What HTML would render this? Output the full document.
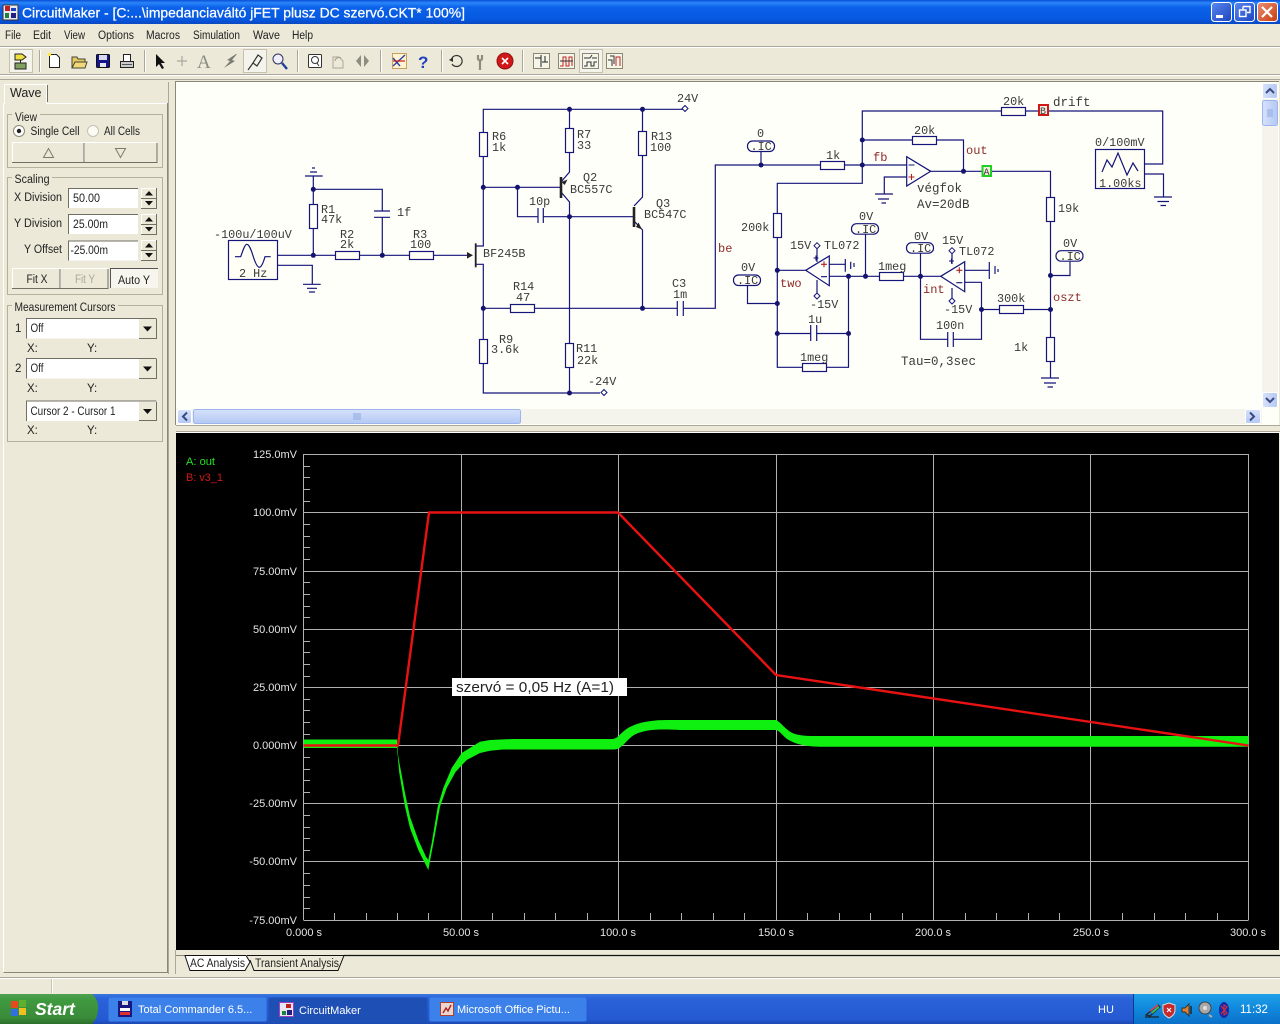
<!DOCTYPE html>
<html><head><meta charset="utf-8"><title>CircuitMaker</title>
<style>
html,body{margin:0;padding:0;background:#ece9d8;overflow:hidden}
svg{display:block}
text{font-family:"Liberation Sans",sans-serif;white-space:pre}
.m{font-family:"Liberation Mono",monospace;font-size:11.8px;fill:#3a3a3a}
.r{font-family:"Liberation Mono",monospace;font-size:12px;fill:#8c2a2a}
.w{fill:none;stroke:#14147a;stroke-width:1.2}
.b{fill:#fffff6;stroke:#14147a;stroke-width:1.2}
.d{fill:#14146e}
.ui{font-size:11.5px;fill:#222}
.pl{font-size:11px;fill:#e4e4e4}
.g{fill:none;stroke:#b0b0b0;stroke-width:1}
.t{fill:none;stroke:#b0b0b0;stroke-width:1}
.gb{fill:none;stroke:#b4b19c;stroke-width:1}
.ic{fill:#fffff6;stroke:#14147a;stroke-width:1.2}
.tb{font-size:11px;fill:#fff}
</style></head><body>
<svg width="1280" height="1024" viewBox="0 0 1280 1024" xmlns="http://www.w3.org/2000/svg">
<defs>
<linearGradient id="tt" x1="0" y1="0" x2="0" y2="1"><stop offset="0" stop-color="#0a50d8"/><stop offset=".12" stop-color="#2a86f8"/><stop offset=".3" stop-color="#0c62ea"/><stop offset=".8" stop-color="#0658e0"/><stop offset="1" stop-color="#0a48c0"/></linearGradient>
<linearGradient id="tk" x1="0" y1="0" x2="0" y2="1"><stop offset="0" stop-color="#3a78e0"/><stop offset=".15" stop-color="#2a62d8"/><stop offset=".85" stop-color="#2459d2"/><stop offset="1" stop-color="#1c48b0"/></linearGradient>
<linearGradient id="st" x1="0" y1="0" x2="0" y2="1"><stop offset="0" stop-color="#4fa04f"/><stop offset=".2" stop-color="#3f9a3f"/><stop offset=".8" stop-color="#3a8a3a"/><stop offset="1" stop-color="#2a6e2a"/></linearGradient>
<linearGradient id="try" x1="0" y1="0" x2="0" y2="1"><stop offset="0" stop-color="#1ea0e8"/><stop offset=".5" stop-color="#1088dc"/><stop offset="1" stop-color="#0c70c8"/></linearGradient>
<linearGradient id="bl" x1="0" y1="0" x2="1" y2="1"><stop offset="0" stop-color="#5a88ee"/><stop offset="1" stop-color="#1c44c0"/></linearGradient>
<linearGradient id="rd" x1="0" y1="0" x2="1" y2="1"><stop offset="0" stop-color="#ea9070"/><stop offset="1" stop-color="#c83c10"/></linearGradient>
<linearGradient id="sb" x1="0" y1="0" x2="0" y2="1"><stop offset="0" stop-color="#d6e2fb"/><stop offset="1" stop-color="#b4c8f4"/></linearGradient>
<linearGradient id="sbv" x1="0" y1="0" x2="1" y2="0"><stop offset="0" stop-color="#d6e2fb"/><stop offset="1" stop-color="#b4c8f4"/></linearGradient>
</defs>

<!-- base -->
<rect width="1280" height="1024" fill="#ece9d8"/>

<!-- title bar -->
<rect width="1280" height="24" fill="url(#tt)"/>
<rect x="3" y="5" width="15" height="15" fill="#e8e8f0" stroke="#333"/>
<rect x="5" y="6" width="5" height="5" fill="#c02020"/><rect x="11" y="8" width="5" height="3" fill="#2040c0"/><rect x="5" y="13" width="4" height="5" fill="#208040"/><rect x="11" y="13" width="5" height="5" fill="#202080"/>
<text x="22" y="17.500" font-size="14" fill="#fff" stroke="#fff" stroke-width=".25" textLength="443" lengthAdjust="spacingAndGlyphs">CircuitMaker - [C:...\impedanciaváltó jFET plusz DC szervó.CKT* 100%]</text>
<rect x="1211.500" y="2.500" width="20" height="19" rx="3" fill="url(#bl)" stroke="#fff"/>
<rect x="1216" y="15" width="7" height="3" fill="#fff"/>
<rect x="1234.500" y="2.500" width="20" height="19" rx="3" fill="url(#bl)" stroke="#fff"/>
<path d="M1243 6.500h7v6h-3M1243 6.500v3" fill="none" stroke="#fff" stroke-width="1.400"/><rect x="1239.500" y="10" width="6.500" height="6.500" fill="none" stroke="#fff" stroke-width="1.400"/>
<rect x="1257.500" y="2.500" width="20" height="19" rx="3" fill="url(#rd)" stroke="#fff"/>
<path d="M1262 7l10 10M1272 7l-10 10" stroke="#fff" stroke-width="2.200"/>

<!-- menu -->
<text x="5" y="39" class="ui" textLength="16" lengthAdjust="spacingAndGlyphs">File</text><text x="33" y="39" class="ui" textLength="18" lengthAdjust="spacingAndGlyphs">Edit</text><text x="64" y="39" class="ui" textLength="21" lengthAdjust="spacingAndGlyphs">View</text><text x="98" y="39" class="ui" textLength="36" lengthAdjust="spacingAndGlyphs">Options</text><text x="146" y="39" class="ui" textLength="34" lengthAdjust="spacingAndGlyphs">Macros</text><text x="193" y="39" class="ui" textLength="47" lengthAdjust="spacingAndGlyphs">Simulation</text><text x="253" y="39" class="ui" textLength="27" lengthAdjust="spacingAndGlyphs">Wave</text><text x="292" y="39" class="ui" textLength="21" lengthAdjust="spacingAndGlyphs">Help</text>
<path d="M0 46.500H1280" stroke="#aca899"/><path d="M0 47.500H1280" stroke="#fff"/>
<path d="M0 74.500H1280" stroke="#aca899"/><path d="M0 75.500H1280" stroke="#fff"/>
<path d="M0 79.500H1280" stroke="#aca899"/>

<!-- toolbar separators -->
<g stroke="#aca899"><path d="M39.500 50V72M144.500 50V72M297.500 50V72M380.500 50V72M441.500 50V72M522.500 50V72"/></g>
<g stroke="#fff"><path d="M40.500 50V72M145.500 50V72M298.500 50V72M381.500 50V72M442.500 50V72M523.500 50V72"/></g>
<!-- toolbar pressed -->
<rect x="9.500" y="49.500" width="23" height="23" fill="#f5f4ec" stroke="#c4c1b0"/>
<rect x="243.500" y="49.500" width="23" height="23" fill="#f5f4ec" stroke="#c4c1b0"/>
<rect x="579.500" y="49.500" width="23" height="23" fill="#f5f4ec" stroke="#c4c1b0"/>
<!-- icons -->
<path d="M15 54h7l4 3-4 3h-7z" fill="#f0e040" stroke="#222"/><path d="M15 63h11v6H15z" fill="#80a060" stroke="#222"/><path d="M20.500 60v3" stroke="#222"/>
<path d="M49.500 54.500h7l3 3v10h-10z" fill="#fff" stroke="#222"/><rect x="48" y="53" width="3" height="3" fill="#ffe840"/>
<path d="M72 57h5l1 2h7v9H72z" fill="#e8c860" stroke="#443"/><path d="M72 68l3-6h12l-2 6z" fill="#f2d878" stroke="#443"/>
<rect x="96.500" y="54.500" width="13" height="13" rx="1" fill="#14148c" stroke="#111"/><rect x="99" y="55" width="8" height="5" fill="#d8d8f0"/><rect x="100" y="63" width="6" height="4" fill="#e8e8e8"/>
<rect x="123.500" y="54.500" width="7" height="7" fill="#fff" stroke="#222"/><rect x="120.500" y="61.500" width="13" height="6" fill="#ccc" stroke="#222"/><path d="M122 64.500h10" stroke="#555"/>
<path d="M156 54l0 13 3-3 3 5 2-1-3-5h4z" fill="#111"/>
<path d="M182 56v10M177 61h10" stroke="#a8a8a0" stroke-width="1.200"/>
<text x="197" y="68" font-size="19" fill="#8a8a82" style="font-family:'Liberation Serif',serif">A</text>
<path d="M236 54l-9 6 3 1-6 7 11-7-3-1 5-6z" fill="#7c7c74"/>
<path d="M248 70l5-7M253 63l5-8 4 3-5 8z" fill="none" stroke="#333" stroke-width="1.200"/>
<circle cx="278" cy="59" r="5" fill="#eef" stroke="#335"/><path d="M282 63l5 6" stroke="#2040a0" stroke-width="2.400"/>
<rect x="308.500" y="54.500" width="13" height="13" rx="1" fill="#fff" stroke="#333"/><circle cx="315" cy="60" r="3.500" fill="none" stroke="#333"/><path d="M317 63l2 3" stroke="#333"/>
<path d="M333 57h6l4 4v7h-10z" fill="none" stroke="#aaa69a"/><path d="M335 61a4 4 0 0 1 6-3" fill="none" stroke="#a09c90"/>
<path d="M361 55l-5 6 5 6zM364 55l5 6-5 6z" fill="#8f8c80"/>
<rect x="392.500" y="53.500" width="14" height="15" fill="#fff3d0" stroke="#c8a060"/><path d="M393 66l12-11M393 58l7 8" stroke="#3040a0" stroke-width="1.400"/><path d="M393 61h12" stroke="#c02020" stroke-width="1.200"/>
<text x="418" y="68" font-size="17" font-weight="bold" fill="#2040c0">?</text>
<path d="M452 58a5.500 5.500 0 1 1 0 6" fill="none" stroke="#333" stroke-width="1.200"/><path d="M449 60l4-3v5z" fill="#333"/>
<path d="M478 55v4l2 2 2-2v-4M480 61v9" fill="none" stroke="#8f8c80" stroke-width="2.200"/>
<circle cx="505" cy="61" r="8" fill="#d01818" stroke="#901010"/><path d="M502 58l6 6M508 58l-6 6" stroke="#fff" stroke-width="1.600"/>
<g fill="none"><rect x="533.500" y="53.500" width="16" height="15" fill="#f6f6e8" stroke="#8a8776"/><path d="M535 58h6v9M541 58v-3M545 56v6M542 62h6" stroke="#222"/></g>
<g fill="none"><rect x="558.500" y="53.500" width="16" height="15" fill="#f6f6e8" stroke="#8a8776"/><path d="M560 66h3v-9h3v9h3v-9h3v9" stroke="#c02020"/><path d="M560 61h13" stroke="#333"/></g>
<g fill="none"><rect x="582.500" y="53.500" width="16" height="15" fill="#f6f6e8" stroke="#8a8776"/><path d="M584 58h6l2-3M592 58h5" stroke="#333"/><path d="M584 66h3v-4h4v4h3v-4h3" stroke="#333"/></g>
<g fill="none"><rect x="606.500" y="53.500" width="16" height="15" fill="#f6f6e8" stroke="#8a8776"/><path d="M608 60h4v6M610 56h4v8" stroke="#333"/><path d="M616 66v-9h4v9" stroke="#c02020"/></g>

<!-- left panel -->
<path d="M167.500 103V972.500H3.500" fill="none" stroke="#8a8776"/>
<path d="M168.500 82V974" stroke="#aca899"/>
<path d="M3.500 972V103.500H4M47 103.500H167" fill="none" stroke="#fff"/>
<path d="M4.500 104V84.500H46.500V104" fill="#ece9d8" stroke="#fff"/>
<path d="M47.500 85V102" stroke="#716f64"/>
<text x="10" y="97" font-size="12.500" fill="#222">Wave</text>

<!-- View -->
<rect x="7.500" y="114.500" width="155" height="53" class="gb"/><rect x="12" y="110" width="28" height="10" fill="#ece9d8"/>
<text x="15" y="121" class="ui" textLength="22" lengthAdjust="spacingAndGlyphs">View</text>
<circle cx="19" cy="131" r="5.500" fill="#fff" stroke="#8a8776"/><circle cx="19" cy="131" r="2.200" fill="#222"/>
<text x="30.500" y="135" class="ui" textLength="49" lengthAdjust="spacingAndGlyphs">Single Cell</text>
<circle cx="93" cy="131" r="5.500" fill="#fbfaf4" stroke="#c4c1b0"/>
<text x="104" y="135" class="ui" textLength="36" lengthAdjust="spacingAndGlyphs">All Cells</text>
<path d="M12.500 162V142.500H84M84.500 162V142.500H157" fill="none" stroke="#fff"/>
<path d="M12 162.500H84V143M84.500 162.500H157V143" fill="none" stroke="#716f64"/>
<path d="M43.500 157.500l5-9 5 9z" fill="none" stroke="#7c7a6c"/><path d="M115.500 148.500l5 9 5-9z" fill="none" stroke="#7c7a6c"/>

<!-- Scaling -->
<rect x="7.500" y="177.500" width="155" height="117" class="gb"/><rect x="12" y="172" width="40" height="10" fill="#ece9d8"/>
<text x="14.500" y="183" class="ui" textLength="35" lengthAdjust="spacingAndGlyphs">Scaling</text>
<text x="14" y="201" class="ui" textLength="48" lengthAdjust="spacingAndGlyphs">X Division</text><text x="14" y="227" class="ui" textLength="48" lengthAdjust="spacingAndGlyphs">Y Division</text><text x="24" y="253" class="ui" textLength="38" lengthAdjust="spacingAndGlyphs">Y Offset</text>
<g fill="#fff"><rect x="68" y="188" width="70" height="20"/><rect x="68" y="214" width="70" height="20"/><rect x="68" y="240.500" width="70" height="20"/></g>
<g stroke="#716f64" fill="none"><path d="M68.500 208V188.500H138M68.500 234V214.500H138M68.500 260.500V241H138"/></g>
<text x="73" y="202" class="ui" textLength="27" lengthAdjust="spacingAndGlyphs">50.00</text><text x="73" y="228" class="ui" textLength="35" lengthAdjust="spacingAndGlyphs">25.00m</text><text x="70.500" y="254" class="ui" textLength="37.500" lengthAdjust="spacingAndGlyphs">-25.00m</text>
<g fill="none" stroke="#fff"><path d="M141.500 208V188.500H156M141.500 234V214.500H156M141.500 260V240.500H156"/></g>
<g fill="none" stroke="#716f64"><path d="M141 208.500H156.500V188M141 234.500H156.500V214M141 260.500H156.500V240"/><path d="M141 198.500H156M141 224.500H156M141 250.500H156"/></g>
<path d="M149 191l-4 4.500h8zM149 205.500l-4-4.500h8zM149 217l-4 4.500h8zM149 231.500l-4-4.500h8zM149 243l-4 4.500h8zM149 257.500l-4-4.500h8z" fill="#111"/>
<path d="M12.500 288V268.500H60M60.500 288V268.500H108" fill="none" stroke="#fff"/>
<path d="M12 288.500H60V269M60.500 288.500H108V269" fill="none" stroke="#716f64"/>
<rect x="110" y="268" width="48" height="20" fill="#f6f5ee"/>
<path d="M110.500 288V268.500H158" fill="none" stroke="#555"/>
<text x="26.500" y="283" class="ui" textLength="21" lengthAdjust="spacingAndGlyphs">Fit X</text><text x="75" y="283" class="ui" style="fill:#aca899" textLength="20" lengthAdjust="spacingAndGlyphs">Fit Y</text><text x="118" y="284" class="ui" textLength="32" lengthAdjust="spacingAndGlyphs">Auto Y</text>

<!-- Measurement -->
<rect x="7.500" y="305.500" width="155" height="136" class="gb"/><rect x="12" y="301" width="106" height="10" fill="#ece9d8"/>
<text x="14.500" y="311" class="ui" textLength="101" lengthAdjust="spacingAndGlyphs">Measurement Cursors</text>
<text x="15" y="332" class="ui">1</text><text x="15" y="372" class="ui">2</text>
<g fill="#fff"><rect x="26.500" y="318.500" width="130" height="20"/><rect x="26.500" y="358.500" width="130" height="20"/><rect x="26.500" y="401" width="130" height="20"/></g>
<g fill="none" stroke="#716f64"><path d="M26.500 338.500V318.500H156.500M26.500 378.500V358.500H156.500M26.500 421V401H156.500"/></g>
<g fill="#ece9d8"><rect x="139" y="319" width="17.500" height="19"/><rect x="139" y="359" width="17.500" height="19"/><rect x="139" y="402" width="17.500" height="18"/></g>
<g fill="none" stroke="#716f64"><path d="M139 338.500H156.500V319M139 378.500H156.500V359M139 420.500H156.500V402"/></g>
<path d="M143 326.500h9l-4.500 5zM143 366.500h9l-4.500 5zM143 409h9l-4.500 5z" fill="#111"/>
<text x="30.500" y="332" class="ui" textLength="13" lengthAdjust="spacingAndGlyphs">Off</text><text x="30.500" y="372" class="ui" textLength="13" lengthAdjust="spacingAndGlyphs">Off</text><text x="30.500" y="415" class="ui" textLength="85" lengthAdjust="spacingAndGlyphs">Cursor 2 - Cursor 1</text>
<text x="27" y="352" class="ui">X:</text><text x="87" y="352" class="ui">Y:</text>
<text x="27" y="392" class="ui">X:</text><text x="87" y="392" class="ui">Y:</text>
<text x="27" y="434" class="ui">X:</text><text x="87" y="434" class="ui">Y:</text>

<!-- schematic area -->
<rect x="176" y="82" width="1103" height="343" fill="#fffffa"/>
<path d="M175.500 425V81.500H1279" fill="none" stroke="#8a8776"/>

<!-- v scrollbar -->
<rect x="1262" y="83" width="16" height="325" fill="#f4f3ec"/>
<rect x="1262.500" y="83.500" width="15" height="15" rx="2" fill="url(#sbv)" stroke="#fff"/>
<path d="M1266 93l4-4 4 4" fill="none" stroke="#3a4a80" stroke-width="2"/>
<rect x="1262.500" y="100.500" width="15" height="25" rx="2" fill="url(#sbv)" stroke="#9db5ee"/>
<path d="M1267 110h6M1267 112h6M1267 114h6M1267 116h6" stroke="#8fa8e0"/>
<rect x="1262.500" y="392.500" width="15" height="15" rx="2" fill="url(#sbv)" stroke="#fff"/>
<path d="M1266 398l4 4 4-4" fill="none" stroke="#3a4a80" stroke-width="2"/>
<!-- h scrollbar -->
<rect x="177" y="409" width="1085" height="15" fill="#f4f3ec"/>
<rect x="177.500" y="409.500" width="14" height="14" rx="2" fill="url(#sb)" stroke="#fff"/>
<path d="M187 412.500l-4 4 4 4" fill="none" stroke="#3a4a80" stroke-width="2"/>
<rect x="193.500" y="409.500" width="327" height="14" rx="2" fill="url(#sb)" stroke="#9db5ee"/>
<path d="M354 413v7M356 413v7M358 413v7M360 413v7" stroke="#8fa8e0"/>
<rect x="1245.500" y="409.500" width="15" height="14" rx="2" fill="url(#sb)" stroke="#fff"/>
<path d="M1250 412.500l4 4-4 4" fill="none" stroke="#3a4a80" stroke-width="2"/>
<path d="M176 425.500H1280" stroke="#aca899"/>
<path d="M176 431.500H1280" stroke="#aca899"/>
<path d="M176 432.500H1280" stroke="#fff"/>

<!-- wires -->
<g class="w">
<path d="M483.300 132V109.300H685"/>
<path d="M483.300 157V246H476M476 264.300H483.300V339M483.300 364V393H600"/>
<path d="M483.300 187.300H561M517.500 187.300V216.700H538M543.300 216.700H634"/>
<path d="M569.500 109.300V128M569.500 152V172L561 182M561 192L569.500 202V393"/>
<path d="M642.500 109.300V132M642.500 156V197L634 206M634 221L642.500 230V308.300"/>
<path d="M483.300 308.300H510M534.300 308.300H677.300M683.300 308.300H715.300V165H820M844 165H906.700"/>
<path d="M278 255.300H335.300M359.700 255.300H409.300M433.700 255.300H470"/>
<path d="M278 265.300H312.300V284M313.300 255.300V228.700M313.300 204.300V176M313.300 189.300H382.300V211M382.300 217.300V255.300"/>
<path d="M862.300 165V111H1001M1026 111H1162.700V164H1145M1145 174H1163.500V197"/>
<path d="M862.300 140H912M937 140H963.500V171M930.700 171.300H1050.500V197M1050.500 221V337M1050.500 362V378"/>
<path d="M906.700 177H884.300V194"/>
<path d="M862.300 165V183.300H777.300V213M777.300 238V367.300H802M827 367.300H848.500V276.300"/>
<path d="M777.300 270.300H805.700M777.300 303.500H747.500V285.700M777.300 333.500H810.700M816.700 333.500H848.500"/>
<path d="M829.300 276.300H879M903.700 276.300H940.700M829.300 264.300H845.300"/>
<path d="M865.500 234.300V276.300M761 151V165"/>
<path d="M817 248V262M817 280V293"/>
<path d="M920.500 253.300V339.300H947.700M953.300 339.300H981.500V282.300H964.700M964.700 270.300H989.300"/>
<path d="M981.500 309.500H999M1024 309.500H1050.500"/>
<path d="M952 253V264M952 288V298"/>
<path d="M1070 261.700V275.500H1050.500"/>
</g>
<!-- transistors, plates, grounds -->
<g fill="none" stroke="#14147a" stroke-width="1.200">
<path d="M374 211H390M374 217.300H390"/>
<path d="M538 208V223M543.300 208V223"/>
<path d="M677.300 301V316M683.300 301V316"/>
<path d="M810.700 325V341M816.700 325V341"/>
<path d="M947.700 332V347M953.300 332V347"/>
<path d="M845.300 259V271.700M850.700 261.700V269M854 263V267"/>
<path d="M989.300 262V279M995 266V274M998 269V272"/>
<path d="M305 176H322.700M310 172H317M312 168H315"/>
<path d="M303 284.300H320.700M307 288.300H317M309 292H315"/>
<path d="M875 194H893M878 199H889M881.500 203H886"/>
<path d="M1154 197H1172M1157.500 201.500H1169M1160.500 205.500H1166"/>
<path d="M1041 378H1059M1044 383H1056M1047.500 387H1053"/>
</g>
<path d="M561 177V198M634 207V227" stroke="#222" stroke-width="2.600" fill="none"/>
<path d="M475.700 243.300V267.300" stroke="#222" stroke-width="1.800" fill="none"/>
<path d="M467 252l6 3.300-6 3.300z" fill="#222"/>
<path d="M561.500 182l6-2.500-2.800 5.500z" fill="#222"/>
<path d="M642 229.500l-6-2.500 2.500-4.500z" fill="#222"/>
<!-- resistors -->
<g class="b">
<rect x="479.500" y="132.500" width="8" height="24"/><rect x="565.500" y="128.500" width="8" height="24"/><rect x="638.500" y="131.500" width="8" height="24"/>
<rect x="309.500" y="204.500" width="8" height="24"/><rect x="335.500" y="251.500" width="24" height="8"/><rect x="409.500" y="251.500" width="24" height="8"/>
<rect x="510.500" y="304.500" width="24" height="8"/><rect x="479.500" y="339.500" width="8" height="24"/><rect x="565.500" y="343.500" width="8" height="24"/>
<rect x="820.500" y="161.500" width="24" height="8"/><rect x="912.500" y="136.500" width="24" height="8"/><rect x="1001.500" y="107.500" width="24" height="8"/>
<rect x="773.500" y="213.500" width="8" height="24"/><rect x="802.500" y="363.500" width="24" height="8"/><rect x="879.500" y="272.500" width="24" height="8"/>
<rect x="999.500" y="305.500" width="24" height="8"/><rect x="1046.500" y="197.500" width="8" height="24"/><rect x="1046.500" y="337.500" width="8" height="24"/>
</g>
<!-- opamps -->
<g fill="#fffffa" stroke="#14147a" stroke-width="1.200">
<path d="M906.700 156.700V186L930.700 171.300z"/>
<path d="M805.700 270.300L829.300 256V285.700z"/>
<path d="M940.700 276.300L964.700 261.700V291.700z"/>
</g>
<g stroke="#b02020" stroke-width="1.100"><path d="M908.500 177h6M911.500 174v6M821 264.300h6M824 261.300v6M956.300 270.300h6M959.300 267.300v6"/></g>
<g stroke="#14147a" stroke-width="1.100"><path d="M908.500 165h6M821 276.700h6M956.300 282.700h6M813.500 258h5M816 255.500v5M949 261h5M951.500 258.500v5"/></g>
<!-- diamonds -->
<g fill="#fffffa" stroke="#14147a" stroke-width="1"><path d="M685 105.500l3 3-3 3-3-3zM604 389.500l3 3-3 3-3-3zM817 242.700l3 3-3 3-3-3zM817 293l3 3-3 3-3-3zM952 247.700l3 3-3 3-3-3zM952 298l3 3-3 3-3-3z"/></g>
<!-- dots -->
<g class="d">
<circle cx="569.500" cy="109.300" r="2.500"/><circle cx="642.500" cy="109.300" r="2.500"/><circle cx="483.300" cy="187.300" r="2.500"/><circle cx="517.500" cy="187.300" r="2.500"/><circle cx="569.500" cy="216.700" r="2.500"/><circle cx="313.300" cy="189.300" r="2.500"/><circle cx="313.300" cy="255.300" r="2.500"/><circle cx="382.300" cy="255.300" r="2.500"/><circle cx="483.300" cy="308.300" r="2.500"/><circle cx="642.500" cy="308.300" r="2.500"/><circle cx="569.500" cy="393" r="2.500"/>
<circle cx="761" cy="165" r="2.500"/><circle cx="862.300" cy="165" r="2.500"/><circle cx="862.300" cy="140" r="2.500"/><circle cx="963.500" cy="171.300" r="2.500"/>
<circle cx="777.300" cy="270.300" r="2.500"/><circle cx="777.300" cy="303.500" r="2.500"/><circle cx="777.300" cy="333.500" r="2.500"/><circle cx="848.500" cy="333.500" r="2.500"/><circle cx="848.500" cy="276.300" r="2.500"/><circle cx="865.500" cy="276.300" r="2.500"/><circle cx="920.500" cy="276.300" r="2.500"/><circle cx="981.500" cy="309.500" r="2.500"/><circle cx="1050.500" cy="275.500" r="2.500"/><circle cx="1050.500" cy="309.500" r="2.500"/>
</g>
<!-- sources -->
<rect x="228.500" y="240.500" width="49" height="39" class="b"/>
<path d="M235 256.700H240.700C243 250 245 244.300 246.700 244.300C249.500 244.300 251.500 251 253.300 256.700C255 262 257 267.300 259.300 267.300C261.500 267.300 263.500 262 265 256.700H270.700" class="w"/>
<rect x="1095.500" y="149.500" width="49" height="39" class="b"/>
<path d="M1102 172L1107 160L1112 167L1118 153L1127 175L1133 163L1138 171" class="w"/>
<!-- IC boxes -->
<g class="ic">
<rect x="747.500" y="141" width="27" height="10.500" rx="5"/><rect x="851.500" y="223.700" width="27" height="10.500" rx="5"/><rect x="733.500" y="275" width="27" height="10.500" rx="5"/><rect x="906.500" y="242.700" width="27" height="10.500" rx="5"/><rect x="1056" y="250.700" width="27" height="10.500" rx="5"/>
</g>
<!-- probes -->
<rect x="1039" y="105" width="9" height="10" fill="#f4f0e0" stroke="#d01818" stroke-width="2"/>
<rect x="982.500" y="166" width="8.500" height="10" fill="#f4f0e0" stroke="#20d020" stroke-width="2"/>
<!-- schematic text -->
<g>
<text class="m" x="1040" y="114" style="font-size:10px">B</text><text class="m" x="983.500" y="175" style="font-size:10px">A</text>
<text class="m" x="214" y="238">-100u/100uV</text><text class="m" x="239" y="277">2 Hz</text>
<text class="m" x="321" y="213">R1</text><text class="m" x="321" y="223">47k</text>
<text class="m" x="340" y="238">R2</text><text class="m" x="340" y="248">2k</text>
<text class="m" x="413" y="238">R3</text><text class="m" x="410" y="248">100</text>
<text class="m" x="397" y="216">1f</text>
<text class="m" x="492" y="140">R6</text><text class="m" x="492" y="151">1k</text>
<text class="m" x="577" y="138">R7</text><text class="m" x="577" y="149">33</text>
<text class="m" x="651" y="140">R13</text><text class="m" x="650" y="151">100</text>
<text class="m" x="583" y="181">Q2</text><text class="m" x="570" y="193">BC557C</text>
<text class="m" x="656" y="207">Q3</text><text class="m" x="644" y="218">BC547C</text>
<text class="m" x="529" y="205">10p</text>
<text class="m" x="483" y="257">BF245B</text>
<text class="m" x="513" y="290">R14</text><text class="m" x="516" y="301">47</text>
<text class="m" x="499" y="343">R9</text><text class="m" x="491" y="353">3.6k</text>
<text class="m" x="576" y="352">R11</text><text class="m" x="577" y="364">22k</text>
<text class="m" x="588" y="385">-24V</text><text class="m" x="677" y="102">24V</text>
<text class="m" x="672" y="287">C3</text><text class="m" x="673" y="298">1m</text>
<text class="m" x="757" y="137">0</text><text class="m" x="750.500" y="150">.IC</text>
<text class="m" x="826" y="159">1k</text>
<text class="m" x="914" y="134">20k</text><text class="m" x="1003" y="105">20k</text>
<text class="m" x="1053" y="106" style="font-size:12.500px">drift</text>
<text class="m" x="1095" y="146">0/100mV</text><text class="m" x="1099" y="187">1.00ks</text>
<text class="m" x="917" y="192" style="font-size:12.500px">végfok</text><text class="m" x="917" y="208" style="font-size:12.500px">Av=20dB</text>
<text class="m" x="1058" y="212">19k</text>
<text class="m" x="741" y="231">200k</text>
<text class="m" x="741" y="271">0V</text><text class="m" x="737" y="284">.IC</text>
<text class="m" x="859" y="220">0V</text><text class="m" x="855" y="233">.IC</text>
<text class="m" x="914" y="240">0V</text><text class="m" x="910" y="252">.IC</text>
<text class="m" x="1063" y="247">0V</text><text class="m" x="1059.500" y="260">.IC</text>
<text class="m" x="790" y="249">15V</text><text class="m" x="824" y="249">TL072</text>
<text class="m" x="810" y="308">-15V</text>
<text class="m" x="942" y="244">15V</text><text class="m" x="959" y="255">TL072</text>
<text class="m" x="944" y="313">-15V</text>
<text class="m" x="878" y="270">1meg</text><text class="m" x="808" y="323">1u</text><text class="m" x="800" y="361">1meg</text>
<text class="m" x="936" y="329">100n</text><text class="m" x="901" y="365" style="font-size:12.500px">Tau=0,3sec</text>
<text class="m" x="997" y="302">300k</text><text class="m" x="1014" y="351">1k</text>
<text class="r" x="718" y="252">be</text><text class="r" x="780" y="287">two</text><text class="r" x="873" y="161">fb</text><text class="r" x="966" y="154">out</text><text class="r" x="923" y="293">int</text><text class="r" x="1053" y="301">oszt</text>
</g>

<!-- plot -->
<rect x="176" y="433" width="1103" height="517" fill="#000"/>
<g class="g">
<path d="M303.500 454.500H1248.500M303.500 512.500H1248.500M303.500 571.500H1248.500M303.500 629.500H1248.500M303.500 687.500H1248.500M303.500 745.500H1248.500M303.500 803.500H1248.500M303.500 861.500H1248.500M303.500 920.500H1248.500"/>
<path d="M303.500 454V920M461.500 454V920M618.500 454V920M776.500 454V920M933.500 454V920M1090.500 454V920M1248.500 454V920"/>
</g>
<path class="t" d="M303 466.500h7M303 477.500h7M303 489.500h7M303 501.500h7M303 524.500h7M303 536.500h7M303 547.500h7M303 559.500h7M303 582.500h7M303 594.500h7M303 606.500h7M303 617.500h7M303 641.500h7M303 652.500h7M303 664.500h7M303 676.500h7M303 699.500h7M303 710.500h7M303 722.500h7M303 734.500h7M303 757.500h7M303 769.500h7M303 780.500h7M303 792.500h7M303 815.500h7M303 827.500h7M303 838.500h7M303 850.500h7M303 873.500h7M303 885.500h7M303 897.500h7M303 908.500h7"/>
<path class="t" d="M334.500 920v-7M366.500 920v-7M397.500 920v-7M428.500 920v-7M492.500 920v-7M524.500 920v-7M555.500 920v-7M587.500 920v-7M650.500 920v-7M681.500 920v-7M713.500 920v-7M744.500 920v-7M807.500 920v-7M839.500 920v-7M870.500 920v-7M902.500 920v-7M965.500 920v-7M996.500 920v-7M1028.500 920v-7M1059.500 920v-7M1122.500 920v-7M1154.500 920v-7M1185.500 920v-7M1217.500 920v-7"/>
<text x="297" y="458" class="pl" text-anchor="end">125.0mV</text><text x="297" y="516" class="pl" text-anchor="end">100.0mV</text><text x="297" y="575" class="pl" text-anchor="end">75.00mV</text><text x="297" y="633" class="pl" text-anchor="end">50.00mV</text><text x="297" y="691" class="pl" text-anchor="end">25.00mV</text><text x="297" y="749" class="pl" text-anchor="end">0.000mV</text><text x="297" y="807" class="pl" text-anchor="end">-25.00mV</text><text x="297" y="865" class="pl" text-anchor="end">-50.00mV</text><text x="297" y="924" class="pl" text-anchor="end">-75.00mV</text>
<text x="304" y="936" class="pl" text-anchor="middle">0.000 s</text><text x="461" y="936" class="pl" text-anchor="middle">50.00 s</text><text x="618" y="936" class="pl" text-anchor="middle">100.0 s</text><text x="776" y="936" class="pl" text-anchor="middle">150.0 s</text><text x="933" y="936" class="pl" text-anchor="middle">200.0 s</text><text x="1091" y="936" class="pl" text-anchor="middle">250.0 s</text><text x="1248" y="936" class="pl" text-anchor="middle">300.0 s</text>
<text x="186" y="465" font-size="11" fill="#20e020" textLength="29" lengthAdjust="spacingAndGlyphs">A: out</text>
<text x="186" y="481" font-size="11" fill="#d01818" textLength="37" lengthAdjust="spacingAndGlyphs">B: v3_1</text>
<!-- green trace -->
<path fill="#10f010" d="M303.500 739.500H397L398.300 756.700L405 793L410 816.700L418.300 840L426 856.700L428.300 860L431.700 843L437.700 806.700L443.300 788L451.700 768L461.700 753L480 741.700L490 740L513 739H612C618 739 620 733 628 728C636 723 650 720 667 720H776C782 723 786 731 795 734C802 736 808 736 820 736H1248.500V746.700H820C805 746.500 795 744 787 739C782 735 780 731 776 730H680C660 729 645 729 634 735C626 740 622 749.500 614 749.500H503L490 750.700L480 753L466.700 760L455.700 771.700L446.700 788L440 806.700L434 840L428.300 870L418.300 850L410 828L405 806.700L399.300 773L397 748H303.500Z"/>
<!-- red trace -->
<path d="M303.500 745.500H398L429 512.500H618L776 675L1248.500 745.500" fill="none" stroke="#e81212" stroke-width="2.400"/>
<!-- annotation -->
<rect x="452" y="678" width="175" height="18" fill="#fff"/>
<text x="456" y="692" font-size="15" fill="#222" textLength="158" lengthAdjust="spacingAndGlyphs">szervó = 0,05 Hz (A=1)</text>

<!-- bottom tabs -->
<path d="M175.500 950V974" stroke="#aca899"/>
<path d="M176 955.500H186" stroke="#8a8776"/>
<path d="M344 955.500H1280" stroke="#111" stroke-width="1.200"/>
<path d="M185 955.500L190 970.500H245L250 962L246 955.500Z" fill="#fff" stroke="#111"/>
<path d="M250 960L254 970.500H338L344 955.500H247" fill="#ece9d8" stroke="#111"/>
<text x="190" y="967" font-size="11.500" fill="#222" textLength="55" lengthAdjust="spacingAndGlyphs">AC Analysis</text>
<text x="255" y="967" font-size="11.500" fill="#222" textLength="84" lengthAdjust="spacingAndGlyphs">Transient Analysis</text>

<!-- status -->
<path d="M0 977.500H1280" stroke="#aca899"/><path d="M0 978.500H1280" stroke="#fff"/>
<path d="M51.500 979V993" stroke="#c8c5b2"/><path d="M52.500 979V993" stroke="#fff"/>

<!-- taskbar -->
<rect y="994" width="1280" height="30" fill="url(#tk)"/>
<path d="M0 994H92Q99 1000 98 1009Q98 1018 92 1024H0Z" fill="url(#st)"/>
<g><rect x="11" y="1001" width="7" height="7" fill="#e84820"/><rect x="19" y="1000" width="7" height="7" fill="#60b030"/><rect x="11" y="1009" width="7" height="7" fill="#3070e0"/><rect x="19" y="1008" width="7" height="7" fill="#f0c020"/></g>
<text x="35" y="1015" font-size="17.500" font-weight="bold" font-style="italic" fill="#fff">Start</text>
<rect x="108.500" y="997.500" width="158" height="24" rx="2" fill="#3c80ea"/>
<rect x="268.500" y="997.500" width="159" height="25" rx="2" fill="#1e4fb4"/>
<rect x="429.500" y="997.500" width="157" height="24" rx="2" fill="#3c80ea"/>
<rect x="118" y="1001" width="14" height="16" fill="#181880"/><rect x="120" y="1008" width="10" height="3" fill="#fff"/><rect x="120" y="1012" width="10" height="3" fill="#e03030"/><rect x="122" y="1001" width="6" height="4" fill="#ddd"/>
<rect x="279.500" y="1002.500" width="14" height="14" fill="#e8e8f0" stroke="#a040c0"/><rect x="286" y="1004" width="5" height="4" fill="#c02020"/><rect x="282" y="1011" width="4" height="4" fill="#208040"/><rect x="287" y="1010" width="5" height="5" fill="#202080"/>
<rect x="440.500" y="1002.500" width="13" height="13" fill="#e8d8d0" stroke="#b04030"/><path d="M443 1013l3-5 2 3 3-6" fill="none" stroke="#b02020" stroke-width="1.400"/>
<text x="138" y="1013" class="tb">Total Commander 6.5...</text>
<text x="299" y="1014" class="tb">CircuitMaker</text>
<text x="457" y="1013" class="tb">Microsoft Office Pictu...</text>
<text x="1098" y="1013" class="tb">HU</text>
<rect x="1133" y="994" width="147" height="30" fill="url(#try)"/>
<path d="M1133.500 994V1024" stroke="#0a3a90"/>
<path d="M1146 1015l12-10 2 2-10 9zM1145 1017h14" fill="none" stroke="#222" stroke-width="1.200"/><path d="M1150 1011l8-6" stroke="#e04040" stroke-width="1.500"/><path d="M1152 1013l7-6" stroke="#40c040" stroke-width="1.500"/>
<path d="M1169 1003l6 2v5q0 5-6 8q-6-3-6-8v-5z" fill="#c82828" stroke="#ddd"/><path d="M1167 1008l4 4M1171 1008l-4 4" stroke="#fff" stroke-width="1.200"/>
<path d="M1182 1008h3l4-4v12l-4-4h-3z" fill="#e08030" stroke="#333"/><path d="M1191 1006v8" stroke="#222" stroke-width="1.400"/>
<circle cx="1205" cy="1008" r="6" fill="#a8a8a8" stroke="#444"/><circle cx="1205" cy="1008" r="2" fill="#e0e0e0"/><path d="M1209 1015l3 2" stroke="#aaa" stroke-width="2"/>
<ellipse cx="1224" cy="1010" rx="5" ry="8" fill="#1828a8"/><path d="M1221 1006l6 7-3 2v-10l3 2-6 7" fill="none" stroke="#e03030"/>
<text x="1240" y="1013" class="tb" style="font-size:11.500px">11:32</text>
</svg>
</body></html>
